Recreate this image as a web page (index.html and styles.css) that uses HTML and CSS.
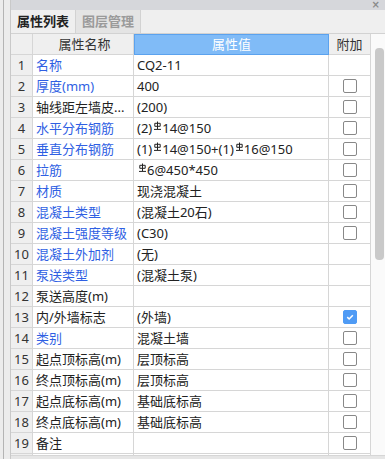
FILE: index.html
```html
<!DOCTYPE html>
<html lang="zh">
<head>
<meta charset="utf-8">
<link rel="stylesheet" href="styles.css">
</head>
<body>
<div class="app">
  <div class="side"><div class="side-line"></div></div>
  <div class="panel">
    <div class="titlebar"><span class="close">×</span></div>
    <div class="tabs">
      <div class="tab active">属性列表</div>
      <div class="tab">图层管理</div>
    </div>
    <div class="content">
      <div class="grid">
        <div class="row head">
          <div class="c num"></div>
          <div class="c name hc">属性名称</div>
          <div class="c val hv">属性值</div>
          <div class="c add hc">附加</div>
        </div>
        <div class="row"><div class="c num">1</div><div class="c name blue">名称</div><div class="c val">CQ2-11</div><div class="c add"></div></div>
        <div class="row"><div class="c num">2</div><div class="c name blue">厚度(mm)</div><div class="c val">400</div><div class="c add"><span class="cb"></span></div></div>
        <div class="row"><div class="c num">3</div><div class="c name">轴线距左墙皮...</div><div class="c val">(200)</div><div class="c add"><span class="cb"></span></div></div>
        <div class="row"><div class="c num">4</div><div class="c name blue">水平分布钢筋</div><div class="c val">(2)<svg class="bar" viewBox="0 0 7 9"><path d="M3.5 0.5V8M0.8 2.3H6.2V5.3H0.8ZM0 8.4H7"/></svg>14@150</div><div class="c add"><span class="cb"></span></div></div>
        <div class="row"><div class="c num">5</div><div class="c name blue">垂直分布钢筋</div><div class="c val">(1)<svg class="bar" viewBox="0 0 7 9"><path d="M3.5 0.5V8M0.8 2.3H6.2V5.3H0.8ZM0 8.4H7"/></svg>14@150+(1)<svg class="bar" viewBox="0 0 7 9"><path d="M3.5 0.5V8M0.8 2.3H6.2V5.3H0.8ZM0 8.4H7"/></svg>16@150</div><div class="c add"><span class="cb"></span></div></div>
        <div class="row"><div class="c num">6</div><div class="c name blue">拉筋</div><div class="c val"><svg class="bar" viewBox="0 0 7 9"><path d="M3.5 0.5V8M0.8 2.3H6.2V5.3H0.8ZM0 8.4H7"/></svg>6@450*450</div><div class="c add"><span class="cb"></span></div></div>
        <div class="row"><div class="c num">7</div><div class="c name blue">材质</div><div class="c val">现浇混凝土</div><div class="c add"><span class="cb"></span></div></div>
        <div class="row"><div class="c num">8</div><div class="c name blue">混凝土类型</div><div class="c val">(混凝土20石)</div><div class="c add"><span class="cb"></span></div></div>
        <div class="row"><div class="c num">9</div><div class="c name blue">混凝土强度等级</div><div class="c val">(C30)</div><div class="c add"><span class="cb"></span></div></div>
        <div class="row"><div class="c num">10</div><div class="c name blue">混凝土外加剂</div><div class="c val">(无)</div><div class="c add"></div></div>
        <div class="row"><div class="c num">11</div><div class="c name blue">泵送类型</div><div class="c val">(混凝土泵)</div><div class="c add"></div></div>
        <div class="row"><div class="c num">12</div><div class="c name">泵送高度(m)</div><div class="c val"></div><div class="c add"></div></div>
        <div class="row"><div class="c num">13</div><div class="c name">内/外墙标志</div><div class="c val">(外墙)</div><div class="c add"><span class="cb on"><svg viewBox="0 0 14 14"><path d="M3.8 7.2L6 9.3L10.3 4.9"/></svg></span></div></div>
        <div class="row"><div class="c num">14</div><div class="c name blue">类别</div><div class="c val">混凝土墙</div><div class="c add"><span class="cb"></span></div></div>
        <div class="row"><div class="c num">15</div><div class="c name">起点顶标高(m)</div><div class="c val">层顶标高</div><div class="c add"><span class="cb"></span></div></div>
        <div class="row"><div class="c num">16</div><div class="c name">终点顶标高(m)</div><div class="c val">层顶标高</div><div class="c add"><span class="cb"></span></div></div>
        <div class="row"><div class="c num">17</div><div class="c name">起点底标高(m)</div><div class="c val">基础底标高</div><div class="c add"><span class="cb"></span></div></div>
        <div class="row"><div class="c num">18</div><div class="c name">终点底标高(m)</div><div class="c val">基础底标高</div><div class="c add"><span class="cb"></span></div></div>
        <div class="row"><div class="c num">19</div><div class="c name">备注</div><div class="c val"></div><div class="c add"><span class="cb"></span></div></div>
        <div class="row"><div class="c num"></div><div class="c name"></div><div class="c val"></div><div class="c add"></div></div>
      </div>
      <div class="vscroll"><div class="thumb"></div></div>
    </div>
    <div class="hbar"></div>
  </div>
</div>
</body>
</html>
```
FILE: styles.css
```css
* { box-sizing: border-box; }
html, body { margin: 0; padding: 0; }
body {
  width: 385px;
  height: 459px;
  overflow: hidden;
  background: #f4f4f4;
  font-family: "Noto Sans", "Noto Sans CJK SC", sans-serif;
  font-size: 13px;
  color: #222;
}
.app { display: flex; height: 459px; }
.side {
  width: 10px;
  flex: none;
  background: #ececec;
  padding-left: 3px;
}
.side-line { width: 1px; height: 100%; background: #b4b4b4; }
.panel {
  flex: 1;
  display: flex;
  flex-direction: column;
  border-left: 1px solid #c9c9c9;
  min-width: 0;
}
.titlebar {
  height: 10px;
  background: #d6d7db;
  display: flex;
  justify-content: flex-end;
  align-items: center;
  padding-right: 5px;
}
.close {
  font-size: 10px;
  line-height: 10px;
  height: 10px;
  color: #8a8a8a;
  font-weight: 700;
  font-family: "DejaVu Sans", sans-serif;
}
.tabs {
  height: 24px;
  display: flex;
  background: #efefef;
  border-bottom: 1px solid #d2d2d2;
}
.tab {
  width: 65px;
  height: 23px;
  line-height: 22px;
  text-align: center;
  font-size: 13px;
  border-right: 1px solid #d2d2d2;
}
.tab.active {
  color: #222;
  font-weight: 700;
  background: #efefef;
}
.tab:not(.active) {
  color: #9a9a9a;
  background: #e4e4e4;
  font-weight: 700;
}
.content {
  flex: none;
  height: 421px;
  display: flex;
  overflow: hidden;
  background: #fbfbfb;
}
.grid { width: 360px; flex: none; }
.row {
  display: grid;
  grid-template-columns: 22px 101px 195px 42px;
  height: 21px;
}
.c {
  border-right: 1px solid #d6d6d6;
  border-bottom: 1px solid #d6d6d6;
  line-height: 20px;
  white-space: nowrap;
  overflow: hidden;
  background: #fff;
}
.num {
  background: #efefef;
  text-align: center;
  color: #333;
  font-size: 13px;
}
.name { padding-left: 3px; }
.val { padding-left: 3px; }
.blue { color: #2f5fe3; }
.head .c { background: #efefef; color: #333; text-align: center; }
.head .hv {
  background: #80bbf7;
  color: #fff;
  border: 1px solid #5ba2ee;
  line-height: 19px;
  padding-left: 0;
}
.add {
  display: flex;
  align-items: center;
  justify-content: center;
}
.cb {
  width: 14px;
  height: 14px;
  border: 1px solid #888;
  border-radius: 2px;
  background: #fff;
  display: block;
}
.cb.on {
  background: #4f9bf5;
  border-color: #4f9bf5;
}
.cb.on svg { width: 12px; height: 12px; display: block; }
.cb.on path { fill: none; stroke: #fff; stroke-width: 1.8; }
.bar {
  width: 7px;
  height: 9px;
  vertical-align: 3px;
  margin: 0 1px 0 2px;
}
.bar path { fill: none; stroke: #222; stroke-width: 1; }
.vscroll {
  flex: 1;
  position: relative;
  background: #fafafa;
}
.thumb {
  position: absolute;
  left: 4px;
  top: 14px;
  width: 9px;
  height: 212px;
  border-radius: 4px;
  background: #c9c9c9;
}
.hbar {
  flex: 1;
  background: #e6e6e6;
  border-top: 1px solid #d6d6d6;
}
```
